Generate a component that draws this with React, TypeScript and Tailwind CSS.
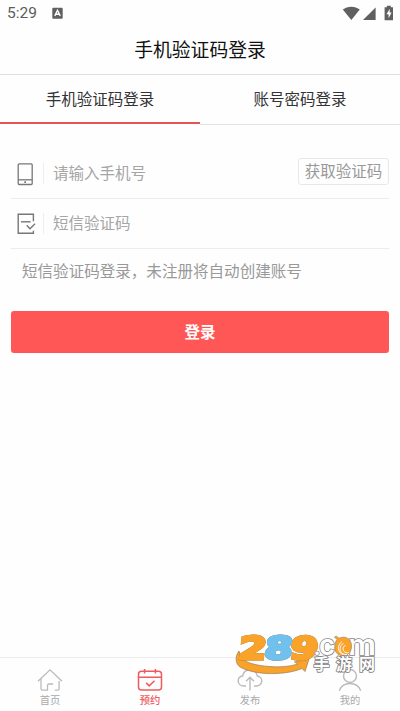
import { ReactNode } from "react";

const tabs = ["手机验证码登录", "账号密码登录"];

const StatusBar = () => (
  <header className="flex h-[26px] items-center justify-between pl-[7px] pr-[6px] text-[#5c5c5c]">
    <div className="flex items-center gap-[15px]">
      <span className="w-[30px] whitespace-nowrap font-['Roboto',sans-serif] text-[15.5px] leading-[29px]">
        5:29
      </span>
      <svg width="11" height="12" viewBox="0 0 11 12">
        <rect x="0.3" y="0.8" width="10.4" height="11" rx="1" fill="#606060" />
        <path
          d="M2.8 8.9 5.5 3.3l2.7 5.6M3.8 7.3h3.4"
          fill="none"
          stroke="#fff"
          strokeWidth="1.4"
        />
      </svg>
    </div>
    <svg width="52" height="16" viewBox="0 0 52 16" fill="#606060">
      <path d="M0.8 4.6C5.4 0.7 13.2 0.7 17.8 4.6L9.3 15Z" />
      <path d="M33.6 2.5V14.9H21Z" />
      <path d="M42.6 2.2h2.2V.8h4v1.4H51v13h-8.4Z" />
      <path d="M47.8 3.7 44.5 9.2h2.1v4l3-5.6h-2Z" fill="#fff" />
    </svg>
  </header>
);

const PhoneIcon = () => (
  <svg width="18" height="24" viewBox="0 0 18 24" fill="none" stroke="#777" strokeWidth="1.3">
    <rect x="1.2" y="1.9" width="14" height="20.6" rx="1" />
    <path d="M1.2 17.8h14" />
    <path d="M7.3 20.1H9" strokeWidth="1.6" />
  </svg>
);

const CodeIcon = () => (
  <svg width="20" height="24" viewBox="0 0 20 24" fill="none" stroke="#777" strokeWidth="1.4">
    <path d="M16.4 9.2V2.3H1.2v19h15.2v-2.5" />
    <path d="M4 9.8h9.6" />
    <path d="m9.7 13.2 3.3 3.5 5-5" />
  </svg>
);

const HomeIcon = () => (
  <svg width="26" height="24" viewBox="0 0 26 24" fill="none" stroke="#bbb" strokeWidth="1.3">
    <path d="M1 13.2 13 1.8l12 11.4" />
    <path d="M4 11v9.8q0 1.4 1.4 1.4h5.1v-4.6q0-1.6 1.6-1.6h4M17.8 22.2h3q1.3 0 1.3-1.4V13" />
  </svg>
);

const CalendarIcon = () => (
  <svg width="26" height="24" viewBox="0 0 26 24" fill="none" stroke="#ee5b5f" strokeWidth="1.5">
    <rect x="1.5" y="3.3" width="23" height="18.8" rx="3" />
    <path d="M1.5 9.3h23M7.6 1v4.6M18.4 1v4.6" />
    <path d="m9.2 14.9 3 3 5.3-5.2" />
  </svg>
);

const UploadIcon = () => (
  <svg width="26" height="24" viewBox="0 0 26 24" fill="none" stroke="#bbb" strokeWidth="1.4">
    <path d="M9 18H6.8C3.4 18 1.2 15.7 1.2 13s2-4.7 4.5-5C6.3 4.2 9.3 1.8 13 1.8s6.8 2.6 7.3 6.2c2.5.3 4.5 2.4 4.5 5s-2.3 5-5.3 5H17" />
    <path d="M13 22.5V9.2M9 13.3l4-4 4 4" />
  </svg>
);

const UserIcon = () => (
  <svg width="26" height="24" viewBox="0 0 26 24" fill="none" stroke="#bbb" strokeWidth="1.4">
    <circle cx="13" cy="8" r="6.5" />
    <path d="M2.3 22.8C3.8 18.4 7.7 15.5 13 15.5s9.2 2.9 10.7 7.3" />
  </svg>
);

const digits = [
  { char: "2", x: 5.5, color: "#f9a32b" },
  { char: "9", x: 57, color: "#f9a32b" },
  { char: "8", x: 31.5, color: "#70c1ed" },
];

const Watermark = () => (
  <svg
    className="pointer-events-none absolute bottom-[33px] left-[232px] overflow-visible"
    width="150"
    height="48"
    viewBox="0 0 150 48"
  >
    <path
      d="M7 21C3 26 3 33.500 8 37 18 42.500 32 44 44 43.500c10-.4 19-2 26-5l3 3L77 29 62.500 32l3.500 2C58 36.500 48 37.500 37 36.500 25 35.500 14 33 9 28Z"
      fill="#f9a32b"
      stroke="#987b55"
      strokeWidth="0.7"
    />
    <g
      className="drop-shadow-[0_0_0.6px_#765f45]"
      fontFamily="'DejaVu Sans', sans-serif"
      fontWeight="700"
      fontSize="31"
      strokeWidth="2.8"
      strokeLinejoin="miter"
    >
      {digits.map((digit) => (
        <text
          key={digit.char}
          transform={`translate(${digit.x} 29) skewX(-7)`}
          fill={digit.color}
          stroke={digit.color}
          textLength="28"
          lengthAdjust="spacingAndGlyphs"
        >
          {digit.char}
        </text>
      ))}
    </g>
    <g
      fontFamily="Inter, sans-serif"
      fontWeight="600"
      fontSize="28"
      fill="#fff"
      stroke="#878787"
      strokeWidth="1.6"
      paintOrder="stroke"
    >
      <text x="81.5" y="25" fontSize="22">.</text>
      <text x="87" y="25" textLength="16" lengthAdjust="spacingAndGlyphs">c</text>
      <text x="116" y="25" textLength="28" lengthAdjust="spacingAndGlyphs">m</text>
    </g>
    <g fill="#f9a32b" stroke="#a58455" strokeWidth="0.7">
      <path d="M105 9.500 102.500 7l1.700-.8 3 2C114 5 120 9.500 119.500 17c-.3 5.500-4.200 9.300-9 8.800-5.300-.5-8.500-4.700-7.700-9.500.3-2.300.7-5 2.200-6.800Z" />
      <path d="M117 22.500c-6 2-8-6-3.500-7M115 24.500c-8 1-9-9-3.500-11M112 25c-7-2-7-10-2-13.500" fill="none" stroke="#fff" strokeWidth="0.9" />
    </g>
    <text
      x="81.5 104 127"
      y="40"
      fontFamily="'Noto Sans CJK SC', sans-serif"
      fontWeight="700"
      fontSize="16"
      fill="#fff"
      stroke="#7d7d7d"
      strokeWidth="1.6"
      paintOrder="stroke"
    >
      手游网
    </text>
  </svg>
);

interface FieldProps {
  icon: ReactNode;
  placeholder: string;
  children?: ReactNode;
}

const Field = ({ icon, placeholder, children }: FieldProps) => (
  <div className="flex h-[50px] items-center border-b border-[#ececec] pl-[6px]">
    <div className="flex w-[26px] items-center">{icon}</div>
    <input
      className="h-[21px] min-w-0 flex-1 border-l border-[#eee] pb-[2px] pl-[9px] text-[15.5px] outline-none placeholder:text-[#a5a5a5]"
      placeholder={placeholder}
    />
    {children}
  </div>
);

const navItems = [
  { label: "首页", icon: <HomeIcon /> },
  { label: "预约", icon: <CalendarIcon />, active: true },
  { label: "发布", icon: <UploadIcon /> },
  { label: "我的", icon: <UserIcon /> },
];

export default function App() {
  return (
    <div className="relative flex h-[711px] w-[400px] flex-col overflow-hidden bg-[#fefefe] font-['Noto_Sans_CJK_SC',sans-serif]">
      <StatusBar />
      <h1 className="flex h-[49px] items-center justify-center border-b border-[#dedede] pb-[2px] text-[18.8px] text-[#111]">
        {tabs[0]}
      </h1>
      <div className="grid h-[50px] grid-cols-2">
        {tabs.map((tab, i) => (
          <button
            key={tab}
            className={
              i === 0
                ? "mb-px border-b-2 border-[#e65354] text-[15.5px] text-[#333]"
                : "border-b border-[#e2e2e2] pb-[2px] text-[15.5px] text-[#333]"
            }
          >
            {tab}
          </button>
        ))}
      </div>

      <main className="flex-1 px-[11px] pt-[24px]">
        <Field icon={<PhoneIcon />} placeholder="请输入手机号">
          <button className="mb-[5px] h-[27px] w-[91px] rounded-[3px] border border-[#e8e8e8] pb-[2px] text-[15.5px] leading-[23px] text-[#999]">
            获取验证码
          </button>
        </Field>
        <Field icon={<CodeIcon />} placeholder="短信验证码" />
        <p className="mt-[9px] whitespace-nowrap pl-[11px] text-[15.55px] leading-6 text-[#999]">
          短信验证码登录，未注册将自动创建账号
        </p>
        <button className="mt-[29px] h-[42px] w-full rounded-[3px] bg-[#ff5656] text-[15.5px] font-bold text-white">
          登录
        </button>
      </main>

      <nav className="grid h-[54px] grid-cols-4 border-t border-[#eee]">
        {navItems.map((item) => (
          <div
            key={item.label}
            className={
              item.active
                ? "flex flex-col items-center pt-[10px] text-[10.3px] font-medium leading-[15px] text-[#ee5b5f]"
                : "flex flex-col items-center pt-[10px] text-[10.3px] leading-[15px] text-[#aaa]"
            }
          >
            {item.icon}
            <span>{item.label}</span>
          </div>
        ))}
      </nav>
      <Watermark />
    </div>
  );
}
